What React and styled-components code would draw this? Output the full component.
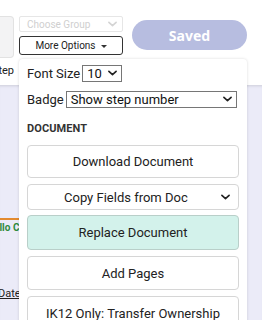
import React from 'react';
import styled, { createGlobalStyle } from 'styled-components';

const GlobalStyle = createGlobalStyle`
  body {
    margin: 0;
    font-family: Roboto, "Liberation Sans", sans-serif;
    color: #222;
  }
  #root {
    width: 262px;
    height: 320px;
    overflow: hidden;
  }
`;

const Page = styled.div`
  position: relative;
  display: flex;
  flex-direction: column;
  height: 320px;
  background: #fff;
`;

const Header = styled.div`
  display: flex;
  align-items: flex-start;
  height: 85px;
  padding-top: 16px;
  box-sizing: border-box;
`;

const LeftStub = styled.div`
  display: flex;
  flex-direction: column;
  width: 14px;
  overflow: hidden;
`;

const StubCard = styled.div`
  height: 42px;
  background: #f3f3f4;
  border: 1px solid #e2e2e2;
  border-left: none;
  border-radius: 0 4px 4px 0;
  box-sizing: border-box;
`;

const StubLabel = styled.div`
  display: flex;
  justify-content: flex-end;
  margin-top: 6px;
  font-size: 11px;
  white-space: nowrap;
  color: #222;
`;

const Controls = styled.div`
  display: flex;
  flex-direction: column;
  gap: 4px;
  width: 104px;
  margin-left: 5px;
`;

const GroupSelect = styled.div`
  display: flex;
  align-items: center;
  justify-content: space-between;
  height: 16px;
  padding: 0 5px 0 7px;
  border: 1px solid #e6e6e6;
  border-radius: 2px;
  box-sizing: border-box;
  font-size: 10px;
  color: #cfcfcf;
`;

const MoreButton = styled.div`
  display: flex;
  align-items: center;
  justify-content: center;
  gap: 5px;
  height: 19px;
  border: 1px solid #333;
  border-radius: 3px;
  box-sizing: border-box;
  font-size: 10px;
  color: #222;
`;

const Caret = styled.span`
  width: 0;
  height: 0;
  border-left: 3px solid transparent;
  border-right: 3px solid transparent;
  border-top: 3px solid #333;
  margin-top: 1px;
`;

const SavedButton = styled.div`
  display: flex;
  align-items: center;
  justify-content: center;
  width: 115px;
  height: 30px;
  margin: 4px 0 0 9px;
  border-radius: 15px;
  background: #b7bde0;
  color: #fff;
  font-family: "Noto Sans", Inter, sans-serif;
  font-weight: 700;
  font-size: 14px;
`;

const Main = styled.div`
  flex: 1;
  background: #ebebf8;
  box-shadow: inset 0 3px 3px -2px rgba(0, 0, 0, 0.12);
  padding-top: 133px;
`;

const Accent = styled.div`
  width: 60px;
  height: 2px;
  background: #e38a2e;
`;

const CutText = styled.div`
  margin-left: ${(p) => p.$shift}px;
  margin-top: ${(p) => p.$top}px;
  font-size: ${(p) => p.$size}px;
  font-weight: ${(p) => (p.$bold ? 700 : 400)};
  color: ${(p) => p.$color};
  text-decoration: ${(p) => (p.$underline ? 'underline' : 'none')};
  white-space: nowrap;
`;

const Menu = styled.div`
  position: absolute;
  left: 19px;
  top: 59px;
  width: 228px;
  height: 280px;
  padding: 6px 8px 0 8px;
  box-sizing: border-box;
  background: #fff;
  border-radius: 4px;
  box-shadow: 0 0 3px rgba(0, 0, 0, 0.15);
  display: flex;
  flex-direction: column;
`;

const FieldRow = styled.div`
  display: flex;
  align-items: center;
  gap: 2px;
  height: 17px;
  margin-top: ${(p) => p.$top}px;
  font-size: 13px;
  color: #222;
`;

const NativeSelect = styled.div`
  display: flex;
  align-items: center;
  justify-content: space-between;
  width: ${(p) => p.$width}px;
  height: 17px;
  padding: 0 4px;
  border: 1px solid #767676;
  box-sizing: border-box;
  font-size: 13px;
  color: #111;
`;

const SectionTitle = styled.div`
  margin-top: 14px;
  font-size: 11px;
  font-weight: 700;
  color: #333;
  letter-spacing: 0.1px;
`;

const ActionList = styled.div`
  display: flex;
  flex-direction: column;
  gap: 6px;
  margin-top: 10px;
`;

const ActionButton = styled.div`
  display: flex;
  align-items: center;
  justify-content: ${(p) => (p.$select ? 'space-between' : 'center')};
  height: ${(p) => p.$h}px;
  margin-top: ${(p) => p.$pull || 0}px;
  padding: ${(p) => (p.$select ? '0 8px 0 36px' : '0')};
  border: 1px solid ${(p) => (p.$active ? '#b9cfc9' : '#d6d6d6')};
  border-radius: 4px;
  box-sizing: border-box;
  background: ${(p) => (p.$active ? '#d3f2eb' : '#fff')};
  font-size: 13px;
  color: #222;
`;

function Chevron({ color = '#222', size = 10 }) {
  return (
    <svg width={size} height={size * 0.7} viewBox="0 0 10 7" fill="none">
      <path d="M1 1.5 L5 5.2 L9 1.5" stroke={color} strokeWidth="1.8" strokeLinecap="round" strokeLinejoin="round" />
    </svg>
  );
}

export default function App() {
  return (
    <>
      <GlobalStyle />
      <Page>
        <Header>
          <LeftStub>
            <StubCard />
            <StubLabel>Step</StubLabel>
          </LeftStub>
          <Controls>
            <GroupSelect>
              <span>Choose Group</span>
              <Chevron color="#d4d4d4" size={9} />
            </GroupSelect>
            <MoreButton>
              More Options <Caret />
            </MoreButton>
          </Controls>
          <SavedButton>Saved</SavedButton>
        </Header>
        <Main>
          <Accent />
          <CutText $shift={-13} $top={2} $size={10} $bold $color="#2f8a3c">Hello Company</CutText>
          <CutText $shift={-2} $top={54} $size={11} $underline $color="#222">Date</CutText>
        </Main>
        <Menu>
          <FieldRow $top={0}>
            Font Size
            <NativeSelect $width={40}>
              <span>10</span>
              <Chevron size={9} />
            </NativeSelect>
          </FieldRow>
          <FieldRow $top={9}>
            Badge
            <NativeSelect $width={171}>
              <span>Show step number</span>
              <Chevron size={9} />
            </NativeSelect>
          </FieldRow>
          <SectionTitle>DOCUMENT</SectionTitle>
          <ActionList>
            <ActionButton $h={33}>Download Document</ActionButton>
            <ActionButton $h={26} $select>
              <span>Copy Fields from Doc</span>
              <Chevron size={9} />
            </ActionButton>
            <ActionButton $h={35} $pull={-1} $active>Replace Document</ActionButton>
            <ActionButton $h={34}>Add Pages</ActionButton>
            <ActionButton $h={34}>IK12 Only: Transfer Ownership</ActionButton>
          </ActionList>
        </Menu>
      </Page>
    </>
  );
}
